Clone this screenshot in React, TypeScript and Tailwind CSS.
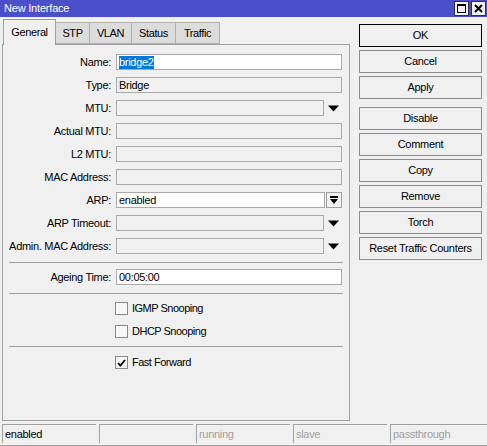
import React from "react";

const FONT = { fontFamily: '"Liberation Sans", Arial, sans-serif' };

type Row = { label: string; value?: string; kind: "text" | "drop" | "arp"; editable?: boolean; selected?: boolean };

const ROWS: Row[] = [
    { label: "Name:", value: "bridge2", kind: "text", editable: true, selected: true },
    { label: "Type:", value: "Bridge", kind: "text" },
    { label: "MTU:", kind: "drop" },
    { label: "Actual MTU:", kind: "text" },
    { label: "L2 MTU:", kind: "text" },
    { label: "MAC Address:", kind: "text" },
    { label: "ARP:", value: "enabled", kind: "arp", editable: true },
    { label: "ARP Timeout:", kind: "drop" },
    { label: "Admin. MAC Address:", kind: "drop" },
];

const BUTTONS = ["Disable", "Comment", "Copy", "Remove", "Torch", "Reset Traffic Counters"];

const TABS = [
    { label: "General", w: "w-[53px]" },
    { label: "STP", w: "w-[34px]" },
    { label: "VLAN", w: "w-[42px]" },
    { label: "Status", w: "w-[44px]" },
    { label: "Traffic", w: "w-[44px]" },
];

function Field({ value, editable, selected, className }: { value?: string; editable?: boolean; selected?: boolean; className: string }) {
    return (
        <div
            className={`flex h-4 items-center border border-[#a9a9a9] px-[2px] ${editable ? "bg-white" : "bg-[#f0f0f0]"} ${className}`}
        >
            {value && (
                <span className={`leading-[13px] ${selected ? "bg-[#0078d7] text-white" : "text-black"}`}>{value}</span>
            )}
        </div>
    );
}

function DownArrow() {
    return (
        <svg width="11" height="7" viewBox="0 0 11 7">
            <path d="M0 0.5H11L5.5 6.5Z" fill="#000" />
        </svg>
    );
}

function Check({ checked, label }: { checked?: boolean; label: string }) {
    return (
        <div className="flex h-[23px] items-center">
            <div className="w-[112px]" />
            <div className="flex h-[13px] w-[13px] items-center justify-center border border-[#8a8a8a] bg-[#f6f6f6]">
                {checked && (
                    <svg width="9" height="8" viewBox="0 0 9 8">
                        <path d="M1 4L3.4 6.6L8 1" stroke="#000" strokeWidth="1.8" fill="none" />
                    </svg>
                )}
            </div>
            <span className="ml-[4px] tracking-[-0.5px]">{label}</span>
        </div>
    );
}

function Sep() {
    return <div className="mx-[6px] w-[334px] border-t border-[#a0a0a0]" />;
}

export default function App() {
    return (
        <div className="relative flex h-[446px] w-[487px] flex-col overflow-hidden bg-[#f0f0f0] text-[11px] tracking-[-0.3px] text-black" style={FONT}>
            {/* Title bar */}
            <div className="flex h-[17px] items-center justify-between bg-[#4b4fc9] pl-[4px] pr-[1px]">
                <span className="text-[11px] tracking-[-0.2px] text-white">New Interface</span>
                <div className="flex gap-[2px]">
                    <div className="flex h-[15px] w-[15px] items-center justify-center border border-[#333] bg-[#f0f0f0]">
                        <div className="h-[9px] w-[9px] border border-black border-t-2" />
                    </div>
                    <div className="flex h-[15px] w-[15px] items-center justify-center border border-[#333] bg-[#f0f0f0]">
                        <svg width="9" height="9" viewBox="0 0 9 9">
                            <path d="M1 1L8 8M8 1L1 8" stroke="#000" strokeWidth="2" />
                        </svg>
                    </div>
                </div>
            </div>

            <div className="flex flex-1">
                {/* Left: tabs + panel */}
                <div className="flex w-[352px] flex-col pl-[2px] pt-[2px]">
                    <div className="flex h-[25px] items-end pl-[1px]">
                        {TABS.map((t, i) => (
                            <div
                                key={t.label}
                                className={
                                    i === 0
                                        ? `relative z-10 -mb-px flex h-[26px] items-center justify-center border border-b-0 border-[#a0a0a0] bg-[#f0f0f0] tracking-[-0.4px] ${t.w}`
                                        : `flex h-[22px] items-center justify-center border border-l-0 border-[#b0b0b0] bg-[#dcdcdc] tracking-[-0.4px] ${t.w}`
                                }
                            >
                                {t.label}
                            </div>
                        ))}
                    </div>
                    <div className="flex h-[377px] w-[348px] flex-col border border-[#a0a0a0] pt-[9px]">
                        <div className="flex flex-col gap-[7px]">
                            {ROWS.map((r) => (
                                <div key={r.label} className="flex h-4 items-center">
                                    <div className="w-[108px] text-right">{r.label}</div>
                                    <div className="w-[5px]" />
                                    {r.kind === "text" && <Field className="w-[226px]" value={r.value} editable={r.editable} selected={r.selected} />}
                                    {r.kind === "drop" && (
                                        <>
                                            <Field className="w-[208px]" value={r.value} />
                                            <div className="flex w-[18px] items-center justify-center pt-[1px]">
                                                <DownArrow />
                                            </div>
                                        </>
                                    )}
                                    {r.kind === "arp" && (
                                        <>
                                            <Field className="w-[209px]" value={r.value} editable />
                                            <div className="ml-[1px] flex h-4 w-4 flex-col items-center justify-center border border-[#a0a0a0] bg-[#f0f0f0]">
                                                <div className="h-[2px] w-[8px] bg-black" />
                                                <svg width="8" height="5" viewBox="0 0 8 5" className="mt-[1px]">
                                                    <path d="M0 0H8L4 5Z" fill="#000" />
                                                </svg>
                                            </div>
                                        </>
                                    )}
                                </div>
                            ))}
                        </div>
                        <div className="mt-[8px]" />
                        <Sep />
                        <div className="mt-[6px] flex h-4 items-center">
                            <div className="w-[108px] text-right">Ageing Time:</div>
                            <div className="w-[5px]" />
                            <Field className="w-[226px]" value="00:05:00" editable />
                        </div>
                        <div className="mt-[8px]" />
                        <Sep />
                        <div className="mt-[3px]" />
                        <Check label="IGMP Snooping" />
                        <Check label="DHCP Snooping" />
                        <div className="mt-[3px]" />
                        <Sep />
                        <div className="mt-[4px]" />
                        <Check checked label="Fast Forward" />
                    </div>
                </div>

                {/* Right: buttons */}
                <div className="flex flex-col pl-[7px] pt-[7px]">
                    <div className="flex h-[23px] w-[123px] items-center justify-center border border-black bg-[#f0f0f0]">OK</div>
                    <div className="mt-[3px] flex flex-col gap-[3px]">
                        {["Cancel", "Apply"].map((b) => (
                            <div key={b} className="flex h-[23px] w-[123px] items-center justify-center border border-[#8c8c8c] bg-[#f0f0f0]">
                                {b}
                            </div>
                        ))}
                    </div>
                    <div className="mt-[8px] flex flex-col gap-[3px]">
                        {BUTTONS.map((b) => (
                            <div key={b} className="flex h-[23px] w-[123px] items-center justify-center border border-[#8c8c8c] bg-[#f0f0f0]">
                                {b}
                            </div>
                        ))}
                    </div>
                </div>
            </div>

            {/* Status bar */}
            <div className="flex h-[24px] gap-[3px] border-b border-[#a0a0a0] pb-[3px] pl-[2px] pt-[2px]">
                {["enabled", "", "running", "slave", "passthrough"].map((s, i) => (
                    <div
                        key={i}
                        className={`flex h-[19px] w-[94px] items-center border-l border-t border-[#a0a0a0] pl-[2px] ${i === 0 ? "text-black" : "text-[#a0a0a0]"} ${i === 4 ? "flex-1" : ""}`}
                    >
                        {s}
                    </div>
                ))}
            </div>
        </div>
    );
}
